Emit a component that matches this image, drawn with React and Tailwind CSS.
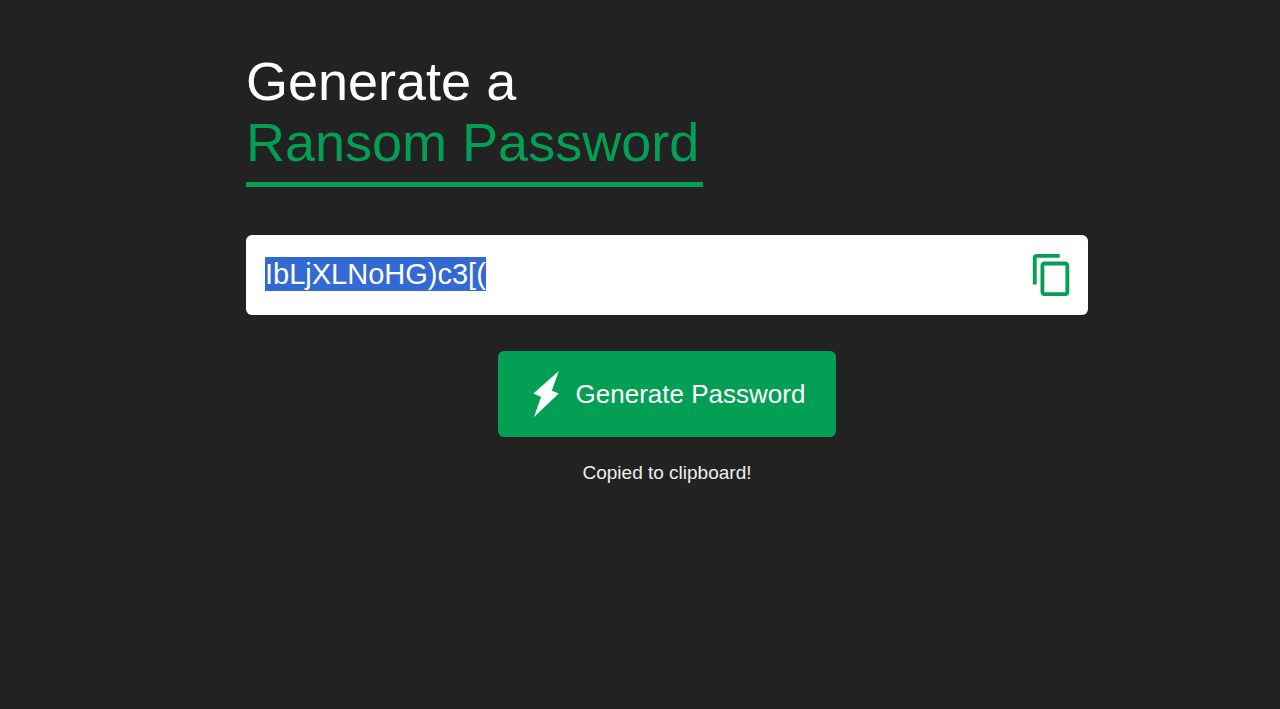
import { useEffect, useRef, useState } from "react";

function CopyIcon() {
  return (
    <svg viewBox="0 0 24 24" className="size-[46px]" fill="currentColor" aria-hidden="true">
      <path d="M16 1H4c-1.1 0-2 .9-2 2v14h2V3h12V1zm3 4H8c-1.1 0-2 .9-2 2v14c0 1.1.9 2 2 2h11c1.1 0 2-.9 2-2V7c0-1.1-.9-2-2-2zm0 16H8V7h11v14z" />
    </svg>
  );
}

function BoltIcon() {
  return (
    <svg viewBox="0 0 26 46" className="h-[46px] w-[26px]" fill="currentColor" aria-hidden="true">
      <path d="M25.8 0 0.4 22.4 8 26 1 46 25.8 22.6 18.8 19.8Z" />
    </svg>
  );
}

export default function App() {
  const field = useRef(null);
  const [password] = useState("IbLjXLNoHG)c3[(");

  const selectPassword = () => {
    field.current.focus();
    field.current.select();
  };

  useEffect(selectPassword, []);

  return (
    <main className="min-h-screen bg-[#222222] pt-[51px] pr-[192px] pl-[246px] font-['Liberation_Sans',Arial,sans-serif] text-white">
      <h1 className="text-[54px] leading-[61px]">
        Generate a<br />
        <span className="inline-block border-b-[5px] border-[#029f55] pr-1 pb-[9px] text-[#029f55]">Ransom Password</span>
      </h1>
      <div className="mt-12 flex h-20 items-center rounded-md bg-white pr-[13px] pl-[19px]">
        <input
          ref={field}
          aria-label="Password"
          readOnly
          value={password}
          className="min-w-0 flex-1 bg-transparent pb-[2px] text-[29px] leading-[34px] text-black outline-none selection:bg-[#3167d1]/99 selection:text-white"
        />
        <button type="button" aria-label="Copy password" onClick={selectPassword} className="text-[#029f55]">
          <CopyIcon />
        </button>
      </div>
      <div className="mt-9 flex flex-col items-center">
        <button type="button" className="flex h-[86px] items-center gap-[17px] rounded-md bg-[#029f55] pr-[31px] pl-[35px] text-[26px]">
          <BoltIcon />
          Generate Password
        </button>
        <p className="mt-6 text-[19px] leading-6 text-[#eeeeee]">Copied to clipboard!</p>
      </div>
    </main>
  );
}
